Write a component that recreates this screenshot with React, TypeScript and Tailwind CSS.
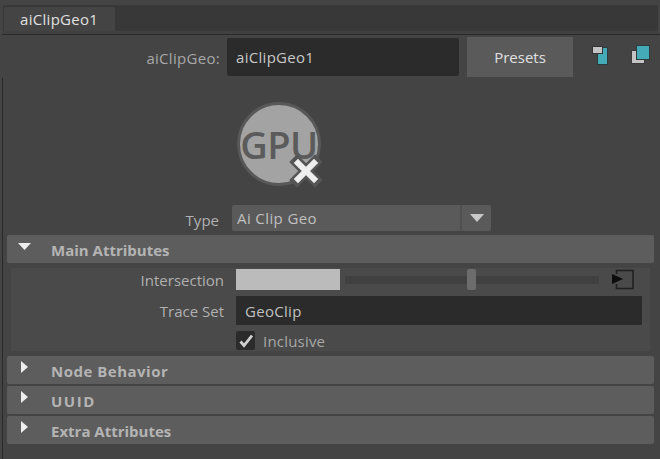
import React from 'react';

const font = "font-['Open_Sans','Liberation_Sans',sans-serif]";

const SectionHeader = ({ label, open, className = '' }: { label: string; open?: boolean; className?: string }) => (
	<div className="h-[28px] rounded-[2px] bg-[#5d5d5d] flex items-center">
		<div className="w-[44px] h-full relative shrink-0">
			{open ? (
				<svg className="absolute left-[11px] top-[8px]" width="14" height="7" viewBox="0 0 14 7">
					<path d="M0 0 H13 L6.5 7 Z" fill="#eeeeee" />
				</svg>
			) : (
				<svg className="absolute left-[13px] top-[4px]" width="8" height="14" viewBox="0 0 8 14">
					<path d="M1 1 L8 7 L1 13 Z" fill="#eeeeee" />
				</svg>
			)}
		</div>
		<span className={`text-[15px] font-bold text-[#b4b4b4] pt-[2px] ${className}`}>{label}</span>
	</div>
);

const App: React.FC = () => {
	return (
		<div className={`w-[660px] h-[459px] overflow-hidden bg-[#444444] text-[15px] ${font}`}>
			{/* tab strip */}
			<div className="pt-[5px] pr-[2px]">
				<div className="ml-[3px] h-[26px] bg-[#383838] flex items-end pl-[1px]">
					<div className="w-[111px] h-[24px] rounded-t-[2px] bg-[#444444] flex items-center pl-[16px] pt-[1px] text-[#e0e0e0] tracking-[0.3px]">
						aiClipGeo1
					</div>
				</div>
				<div className="ml-[3px] h-[3px] bg-[#404040]" />
			</div>
			<div className="ml-[2px] h-px bg-[#2a2a2a]" />

			{/* name row */}
			<div className="h-[43px] flex items-start pt-px">
				<div className="w-[220px] text-right pt-[11px] text-[#a8a8a8] tracking-[0.3px]">aiClipGeo:</div>
				<div className="ml-[7px] mt-[2px] w-[232px] h-[38px] rounded-[2px] bg-[#2b2b2b] flex items-center pl-[9px] text-[#c8c8c8] tracking-[0.3px]">
					aiClipGeo1
				</div>
				<div className="ml-[8px] mt-px w-[106px] h-[40px] bg-[#5a5a5a] flex items-center justify-center text-[#e0e0e0]">
					Presets
				</div>
				<svg className="ml-[19px] mt-[10px]" width="16" height="19" viewBox="0 0 16 19">
					<rect x="5.5" y="1.5" width="10" height="17" fill="#45aab8" stroke="#2e3a3d" />
					<rect x="0.5" y="0.5" width="10" height="7" fill="#c4c4c4" stroke="#333333" />
				</svg>
				<svg className="ml-[23px] mt-[9px]" width="19" height="19" viewBox="0 0 19 19">
					<rect x="0.5" y="5.5" width="13" height="13" fill="#c4c4c4" stroke="#3a3a3a" />
					<rect x="5.5" y="0.5" width="13" height="14" fill="#45aab8" stroke="#2e3a3d" />
				</svg>
			</div>

			{/* attribute body */}
			<div className="ml-[2px] h-[381px] border-l border-[#2a2a2a] pl-[4px] pr-[6px]">
				<div className="h-[127px] flex items-start pl-[230px] pt-[24px]">
					<div className="relative w-[84px] h-[86px]">
						<div className="absolute left-0 top-0 w-[84px] h-[84px] rounded-full bg-[#a3a3a3] border-[3px] border-[#585858] flex items-center justify-center text-[38px] leading-none text-[#5b5b5b] font-semibold tracking-[-0.5px]">
							GPU
						</div>
						<svg className="absolute left-[52px] top-[52px]" width="34" height="34" viewBox="0 0 34 34">
							<path d="M8 8 L26 26 M26 8 L8 26" stroke="#555555" strokeWidth="11" strokeLinecap="square" />
							<path d="M9 9 L25 25 M25 9 L9 25" stroke="#eeeeee" strokeWidth="6" strokeLinecap="square" />
						</svg>
					</div>
				</div>

				<div className="h-[30px] flex items-start">
					<div className="w-[212px] text-right pt-[4px] text-[#b0b0b0]">Type</div>
					<div className="ml-[13px] w-[259px] h-[26px] rounded-[2px] bg-[#5a5a5a] flex items-center">
						<span className="flex-1 pl-[5px] text-[#c0c0c0] tracking-[0.4px]">Ai Clip Geo</span>
						<div className="w-[2px] h-full bg-[#505050]" />
						<div className="w-[29px] flex justify-center">
							<svg width="14" height="8" viewBox="0 0 14 8">
								<path d="M0 0 H14 L7 8 Z" fill="#c8c8c8" />
							</svg>
						</div>
					</div>
				</div>

				<SectionHeader label="Main Attributes" open />

				{/* Main Attributes content */}
				<div className="mt-[5px] mx-[4px] h-[83px] bg-[#4a4a4a] pt-px">
					<div className="h-[21px] flex">
						<div className="w-[213px] text-right text-[#b0b0b0] leading-[23px]">Intersection</div>
						<div className="ml-[12px] w-[104px] h-full bg-[#bbbbbb]" />
						<div className="ml-[5px] w-[254px] h-full relative flex items-center">
							<div className="w-full h-[8px] rounded-[2px] bg-[#404040]" />
							<div className="absolute left-[122px] top-0 w-[9px] h-[21px] rounded-[2px] bg-[#6c6c6c]" />
						</div>
						<svg className="ml-[13px]" width="22" height="21" viewBox="0 0 22 21">
							<path d="M4.5 5 V1.5 H21 V19.5 H4.5 V15" fill="none" stroke="#1f1f1f" strokeWidth="1.5" />
							<path d="M0 5 L11 10 L0 15 Z" fill="#0c0c0c" />
						</svg>
					</div>
					<div className="mt-[6px] h-[29px] flex">
						<div className="w-[213px] text-right text-[#b0b0b0] leading-[31px]">Trace Set</div>
						<div className="ml-[12px] w-[406px] h-full rounded-[1px] bg-[#2b2b2b] flex items-center pl-[9px] pt-[1px] text-[#c0c0c0] tracking-[0.3px]">
							GeoClip
						</div>
					</div>
					<div className="mt-[6px] h-[19px] flex items-center pl-[225px]">
						<div className="w-[19px] h-[19px] rounded-[2px] bg-[#2b2b2b] flex items-center justify-center">
							<svg width="15" height="14" viewBox="0 0 15 14">
								<path d="M2.5 7.5 L6 11.5 L14 1.5" fill="none" stroke="#d0d0d0" strokeWidth="2.8" />
							</svg>
						</div>
						<span className="ml-[8px] pt-[1px] text-[#a8a8a8] tracking-[0.2px]">Inclusive</span>
					</div>
				</div>

				<div className="mt-[5px] flex flex-col gap-[2px]">
					<SectionHeader label="Node Behavior" className="tracking-[0.5px]" />
					<SectionHeader label="UUID" className="tracking-[1.5px]" />
					<SectionHeader label="Extra Attributes" />
				</div>
			</div>
		</div>
	);
};

export default App;
